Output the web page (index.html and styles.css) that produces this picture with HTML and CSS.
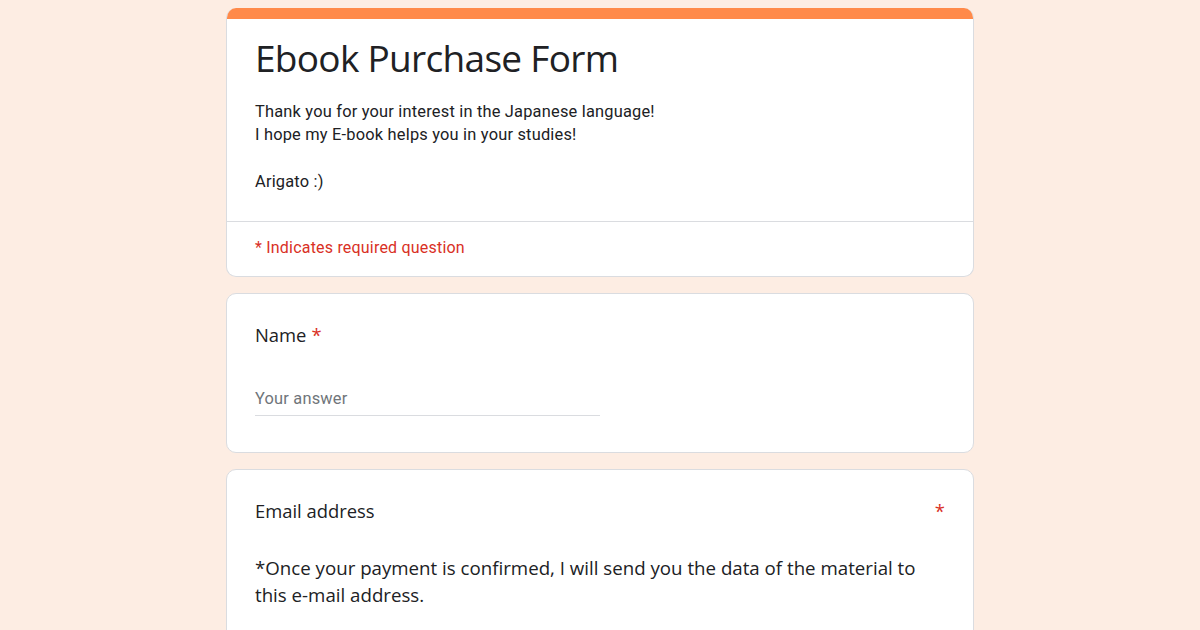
FILE: index.html
```html
<!DOCTYPE html>
<html lang="en">
<head>
<meta charset="utf-8">
<title>Ebook Purchase Form</title>
<link rel="stylesheet" href="styles.css">
</head>
<body>
<main class="page">
  <section class="card header-card">
    <div class="accent"></div>
    <div class="header-main">
      <h1 class="title">Ebook Purchase Form</h1>
      <div class="desc">Thank you for your interest in the Japanese language!<br>I hope my E-book helps you in your studies!<br><br>Arigato :)</div>
    </div>
    <div class="required-note">* Indicates required question</div>
  </section>

  <section class="card question">
    <div class="q-title"><span>Name</span><span class="req req-inline">*</span></div>
    <div class="answer"><span class="placeholder">Your answer</span></div>
  </section>

  <section class="card question">
    <div class="q-title q-title-split"><span>Email address</span><span class="req">*</span></div>
    <div class="q-desc">*Once your payment is confirmed, I will send you the data of the material to this e-mail address.</div>
  </section>
</main>
</body>
</html>
```

FILE: styles.css
```css
html, body {
  margin: 0;
  padding: 0;
}

body {
  background: #fdede3;
  color: #202124;
  font-family: Roboto, "Liberation Sans", sans-serif;
  overflow: hidden;
}

.page {
  width: 748px;
  margin: 0 auto;
  padding-top: 8px;
  display: flex;
  flex-direction: column;
  gap: 16px;
}

.card {
  background: #ffffff;
  border: 1px solid #dadce0;
  border-radius: 10px;
  box-sizing: border-box;
}

.header-card {
  border-top: none;
  overflow: hidden;
}

.accent {
  height: 11px;
  background: #ff8a4a;
  margin: 0 -1px;
}

.header-main {
  padding: 17px 28px 27px;
  border-bottom: 1px solid #dadce0;
}

.title {
  margin: 0;
  font-family: "Open Sans", sans-serif;
  font-weight: 400;
  font-size: 37px;
  line-height: 44px;
  letter-spacing: -0.7px;
  color: #202124;
}

.desc {
  margin-top: 20px;
  font-size: 16.4px;
  line-height: 23.4px;
  letter-spacing: 0.2px;
}

.required-note {
  padding: 14px 28px 17px;
  font-size: 16px;
  line-height: 23px;
  letter-spacing: 0.2px;
  color: #d93025;
}

.question {
  padding: 27px 28px 36px;
}

.q-title {
  font-family: "Open Sans", sans-serif;
  font-size: 18.4px;
  line-height: 28px;
  color: #202124;
  display: flex;
}

.q-title-split {
  justify-content: space-between;
}

.req {
  color: #d93025;
}

.req-inline {
  margin-left: 5px;
}

.answer {
  margin-top: 38px;
  width: 50%;
  padding-bottom: 5px;
  border-bottom: 1px solid #dadce0;
  font-size: 16.4px;
  line-height: 23.4px;
  letter-spacing: 0.2px;
}

.placeholder {
  color: #70757a;
}

.q-desc {
  margin-top: 29px;
  font-family: "Open Sans", sans-serif;
  font-size: 18.7px;
  line-height: 27px;
  color: #202124;
}
```
